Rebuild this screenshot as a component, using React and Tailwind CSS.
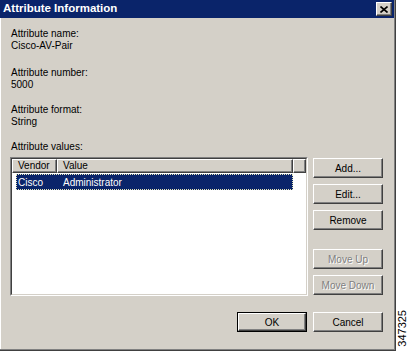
const raised =
  'border border-t-white border-l-white border-r-[#404040] border-b-[#404040] shadow-[inset_-1px_-1px_0_#808080] bg-[#d4d0c8]'

function Button({ label, disabled, isDefault }) {
  const inner = (
    <div className={`${raised} w-full h-full flex items-center justify-center`}>
      <span className={disabled ? 'text-[#808080] [text-shadow:1px_1px_0_#fff]' : 'text-black'}>{label}</span>
    </div>
  )
  if (isDefault) {
    return <div className="w-[70px] h-[20px] border border-black">{inner}</div>
  }
  return <div className="w-[70px] h-[20px]">{inner}</div>
}

function Field({ label, value, className }) {
  return (
    <div className={`pl-[1px] leading-[12px] ${className}`}>
      <div>{label}</div>
      <div>{value}</div>
    </div>
  )
}

export default function App() {
  return (
    <div className="w-[409px] h-[352px] bg-white flex font-['Liberation_Sans',Arial,sans-serif] text-[10px] text-black">
      <div className="w-[396px] h-[351px] bg-[#d4d0c8] flex flex-col border-r border-b border-[#404040] shadow-[inset_-1px_-1px_0_#808080,inset_1px_0_0_#fff]">
        {/* title bar */}
        <div className="h-[18px] mr-[1px] bg-[#0a246a] flex items-center justify-between pl-[3px] pr-[2px]">
          <span className="text-white font-bold text-[11.5px] leading-none">Attribute Information</span>
          <div className={`${raised} w-[16px] h-[14px] flex items-center justify-center`}>
            <svg width="8" height="7" viewBox="0 0 8 7">
              <path d="M0.5 0.5 L7.5 6.5 M7.5 0.5 L0.5 6.5" stroke="#000" strokeWidth="1.6" />
            </svg>
          </div>
        </div>

        <div className="flex flex-col pl-[10px]">
          <Field className="mt-[10px]" label="Attribute name:" value="Cisco-AV-Pair" />
          <Field className="mt-[15px]" label="Attribute number:" value="5000" />
          <Field className="mt-[13px]" label="Attribute format:" value="String" />
          <div className="mt-[13px] pl-[1px] leading-[12px]">Attribute values:</div>

          <div className="mt-[4px] flex">
            {/* list view */}
            <div className="w-[298px] h-[139px] border border-t-[#808080] border-l-[#808080] border-r-white border-b-white">
              <div className="w-full h-full border border-t-[#404040] border-l-[#404040] border-r-[#d4d0c8] border-b-[#d4d0c8] bg-white flex flex-col">
                <div className="h-[14px] flex leading-[12px]">
                  <div className={`${raised} w-[45px] pl-[5px]`}>Vendor</div>
                  <div className={`${raised} w-[236px] pl-[5px]`}>Value</div>
                  <div className={`${raised} flex-1`} />
                </div>
                <div className="mt-[1px] ml-[4px] w-[277px] h-[16px] bg-[#0a246a] border border-dotted border-[#e6e6b8] flex items-center text-white">
                  <span className="w-[46px] pl-[1px]">Cisco</span>
                  <span>Administrator</span>
                </div>
              </div>
            </div>

            {/* side buttons */}
            <div className="ml-[5px] flex flex-col pt-[1px]">
              <Button label="Add..." />
              <div className="mt-[6px]"><Button label="Edit..." /></div>
              <div className="mt-[6px]"><Button label="Remove" /></div>
              <div className="mt-[19px]"><Button label="Move Up" disabled /></div>
              <div className="mt-[6px]"><Button label="Move Down" disabled /></div>
            </div>
          </div>
        </div>

        <div className="mt-[16px] flex justify-end gap-[6px] pr-[12px]">
          <Button label="OK" isDefault />
          <Button label="Cancel" />
        </div>
      </div>

      <div className="flex-1 flex justify-center items-end pb-[5px]">
        <span className="[writing-mode:vertical-rl] rotate-180 text-[11px] leading-none">347325</span>
      </div>
    </div>
  )
}
